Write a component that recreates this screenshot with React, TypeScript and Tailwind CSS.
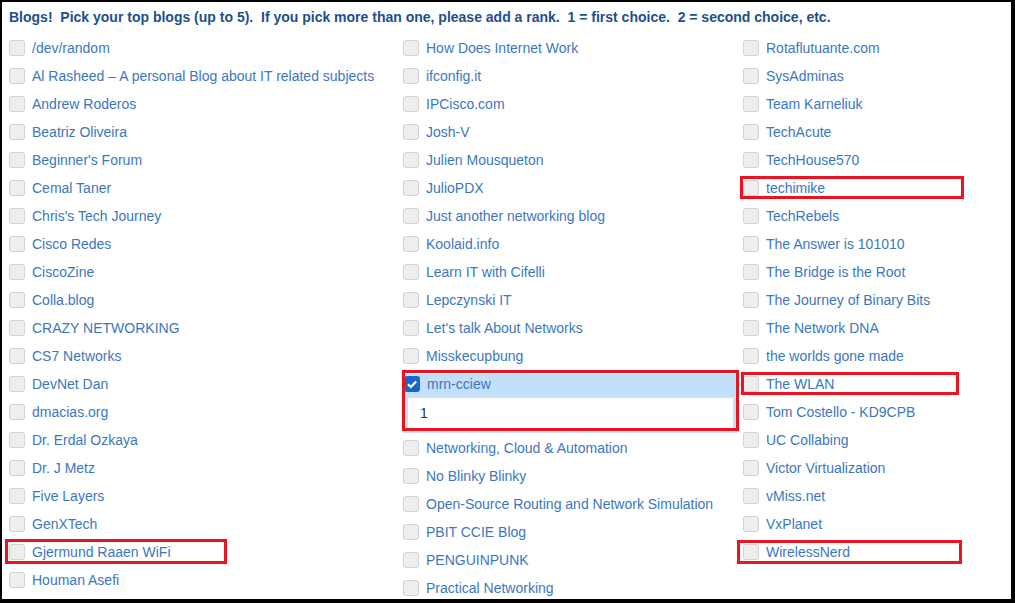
import React from "react";

const col1 = [
  "/dev/random",
  "Al Rasheed – A personal Blog about IT related subjects",
  "Andrew Roderos",
  "Beatriz Oliveira",
  "Beginner's Forum",
  "Cemal Taner",
  "Chris's Tech Journey",
  "Cisco Redes",
  "CiscoZine",
  "Colla.blog",
  "CRAZY NETWORKING",
  "CS7 Networks",
  "DevNet Dan",
  "dmacias.org",
  "Dr. Erdal Ozkaya",
  "Dr. J Metz",
  "Five Layers",
  "GenXTech",
  "Gjermund Raaen WiFi",
  "Houman Asefi",
];

const col2 = [
  "How Does Internet Work",
  "ifconfig.it",
  "IPCisco.com",
  "Josh-V",
  "Julien Mousqueton",
  "JulioPDX",
  "Just another networking blog",
  "Koolaid.info",
  "Learn IT with Cifelli",
  "Lepczynski IT",
  "Let's talk About Networks",
  "Misskecupbung",
  "mrn-cciew",
  "Networking, Cloud & Automation",
  "No Blinky Blinky",
  "Open-Source Routing and Network Simulation",
  "PBIT CCIE Blog",
  "PENGUINPUNK",
  "Practical Networking",
];

const col3 = [
  "Rotaflutuante.com",
  "SysAdminas",
  "Team Karneliuk",
  "TechAcute",
  "TechHouse570",
  "techimike",
  "TechRebels",
  "The Answer is 101010",
  "The Bridge is the Root",
  "The Journey of Binary Bits",
  "The Network DNA",
  "the worlds gone made",
  "The WLAN",
  "Tom Costello - KD9CPB",
  "UC Collabing",
  "Victor Virtualization",
  "vMiss.net",
  "VxPlanet",
  "WirelessNerd",
];

const Box = ({ checked }: { checked?: boolean }) =>
  checked ? (
    <span className="flex h-4 w-4 shrink-0 items-center justify-center rounded-[3px] bg-[#1668c4]">
      <svg width="12" height="12" viewBox="0 0 12 12">
        <path d="M2 6.2 L4.8 9 L10.2 3.4" fill="none" stroke="#fff" strokeWidth="2.2" />
      </svg>
    </span>
  ) : (
    <span className="block h-4 w-4 shrink-0 rounded-[3px] border border-[#d2d2d2] bg-[#eeeeee]" />
  );

const Row = ({ label }: { label: string }) => (
  <div className="flex h-[28px] items-center">
    <Box />
    <span className="ml-[7px] whitespace-nowrap text-[14px] leading-4 text-[#3b77bf]">{label}</span>
  </div>
);

const Selected = ({ label }: { label: string }) => (
  <div className="pt-[4px] pb-[1px]">
    <div className="w-[334px] bg-[#c3e0fb] pb-[4px]">
      <div className="flex h-[23px] items-start pt-[2px] pl-[1px]">
        <Box checked />
        <span className="ml-[7px] text-[14px] leading-4 text-[#3b77bf]">{label}</span>
      </div>
      <div className="ml-[4px] mr-[3px] flex h-[32px] items-center rounded-[2px] border border-[#dcdcdc] bg-white pl-[12px] text-[14px] text-[#333]">
        1
      </div>
    </div>
  </div>
);

const Mark = ({ className }: { className: string }) => (
  <span className={"pointer-events-none absolute border-[3px] border-[#e9141f] " + className} />
);

export default function App() {
  return (
    <div
      className="relative h-[603px] w-[1015px] overflow-hidden border-t-2 border-l-2 border-r-4 border-b-4 border-black bg-white"
      style={{ fontFamily: '"Liberation Sans", Arial, sans-serif' }}
    >
      <div className="pl-[7px] pt-[7px]">
        <p className="whitespace-pre text-[14px] font-bold leading-4 text-[#1d4f8d]">
          {"Blogs!  Pick your top blogs (up to 5).  If you pick more than one, please add a rank.  1 = first choice.  2 = second choice, etc."}
        </p>
        <div className="mt-[9px] grid grid-cols-[394px_340px_1fr]">
          <div className="flex flex-col">
            {col1.map((b) => (
              <Row key={b} label={b} />
            ))}
          </div>
          <div className="flex flex-col">
            {col2.map((b) =>
              b === "mrn-cciew" ? <Selected key={b} label={b} /> : <Row key={b} label={b} />
            )}
          </div>
          <div className="flex flex-col">
            {col3.map((b) => (
              <Row key={b} label={b} />
            ))}
          </div>
        </div>
      </div>

      <Mark className="left-[400px] top-[368px] h-[61px] w-[337px]" />
      <Mark className="left-[738px] top-[174px] h-[23px] w-[224px]" />
      <Mark className="left-[739px] top-[370px] h-[23px] w-[218px]" />
      <Mark className="left-[3px] top-[537px] h-[25px] w-[222px]" />
      <Mark className="left-[735px] top-[538px] h-[24px] w-[225px]" />
    </div>
  );
}
